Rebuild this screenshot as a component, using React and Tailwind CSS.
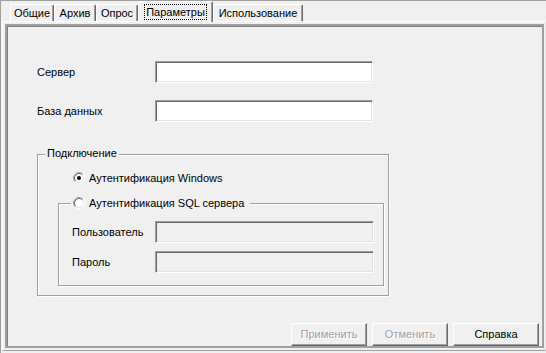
import React from 'react';

const sunken =
  'border-t border-l border-[#a0a0a0] border-b border-r border-b-white border-r-white shadow-[inset_1px_1px_0_#696969,inset_-1px_-1px_0_#e3e3e3]';
const etched =
  'border border-[#a0a0a0] shadow-[1px_1px_0_#fff,inset_1px_1px_0_#fff]';
const raised =
  'border-t border-l border-white border-b border-r border-b-[#696969] border-r-[#696969] shadow-[inset_-1px_-1px_0_#a0a0a0]';

function Radio({ checked }) {
  return (
    <svg width="12" height="12" viewBox="0 0 12 12" className="shrink-0">
      <circle cx="6" cy="6" r="4.5" fill="#fff" />
      <path d="M2.11 9.89 A5.5 5.5 0 0 1 9.89 2.11" fill="none" stroke="#a0a0a0" strokeWidth="1" />
      <path d="M2.82 9.18 A4.5 4.5 0 0 1 9.18 2.82" fill="none" stroke="#696969" strokeWidth="1" />
      <path d="M9.89 2.11 A5.5 5.5 0 0 1 2.11 9.89" fill="none" stroke="#fff" strokeWidth="1" />
      <path d="M9.18 2.82 A4.5 4.5 0 0 1 2.82 9.18" fill="none" stroke="#e3e3e3" strokeWidth="1" />
      {checked && <circle cx="6" cy="6" r="2" fill="#000" />}
    </svg>
  );
}

function Tab({ label, width, active }) {
  if (active) {
    return (
      <div
        className={`relative z-10 -mb-px h-[21px] ${width} flex items-start justify-center pt-[2px] bg-[#f0f0f0] border-t border-l border-white border-r border-r-[#696969] rounded-t-[2px] shadow-[inset_-1px_0_0_#a0a0a0]`}
      >
        <span className="px-px h-[16px] leading-[14px] border border-dotted border-black">{label}</span>
      </div>
    );
  }
  return (
    <div
      className={`h-[17px] ${width} flex items-center justify-center leading-none border-t border-l border-white border-r border-r-[#696969] rounded-t-[2px] shadow-[inset_-1px_0_0_#a0a0a0]`}
    >
      {label}
    </div>
  );
}

function Field({ label, labelWidth, inputWidth, disabled, className = '' }) {
  return (
    <div className={`flex items-center ${className}`}>
      <span className={`${labelWidth} shrink-0`}>{label}</span>
      <div className={`${inputWidth} h-[22px] ${disabled ? 'bg-[#f0f0f0]' : 'bg-white'} ${sunken}`} />
    </div>
  );
}

function Button({ label, width, disabled }) {
  return (
    <div
      className={`${width} h-[23px] flex items-center justify-center bg-[#f0f0f0] ${raised} ${
        disabled ? 'text-[#a0a0a0] [text-shadow:1px_1px_0_#fff]' : 'text-black'
      }`}
    >
      {label}
    </div>
  );
}

export default function App() {
  return (
    <div className="w-[546px] h-[353px] bg-[#f0f0f0] border-l border-t border-[#a0a0a0] flex flex-col font-['Liberation_Sans',Arial,sans-serif] text-[11px] text-black overflow-hidden">
      <div className="h-[20px] flex items-end pl-[9px] shrink-0">
        <Tab label="Общие" width="w-[44px]" />
        <Tab label="Архив" width="w-[42px]" />
        <Tab label="Опрос" width="w-[42px]" />
        <Tab label="Параметры" width="w-[75px]" active />
        <Tab label="Использование" width="w-[90px]" />
      </div>

      <div className="ml-px w-[544px] h-[330px] shrink-0 border-t border-l border-white border-b border-r border-b-[#a0a0a0] border-r-[#e3e3e3] pl-[2px] pt-[2px]">
        <div className="w-[539px] h-[324px] border-2 border-[#a0a0a0] shadow-[inset_1px_1px_0_#808080] flex flex-col">
          <Field label="Сервер" labelWidth="w-[118px]" inputWidth="w-[218px]" className="ml-[30px] mt-[35px]" />
          <Field label="База данных" labelWidth="w-[118px]" inputWidth="w-[218px]" className="ml-[30px] mt-[17px]" />

          <div className={`relative ml-[30px] mt-[32px] w-[352px] pb-[9px] ${etched}`}>
            <span className="absolute -top-[8px] left-[7px] h-[13px] leading-[13px] px-[2px] bg-[#f0f0f0]">
              Подключение
            </span>

            <div className="flex items-center gap-[4px] ml-[35px] mt-[16px] h-[14px]">
              <Radio checked />
              <span>Аутентификация Windows</span>
            </div>

            <div className={`relative ml-[20px] mt-[18px] w-[326px] pb-[12px] ${etched}`}>
              <div className="absolute -top-[8px] left-[12px] h-[14px] flex items-center gap-[4px] pl-[2px] pr-[6px] bg-[#f0f0f0]">
                <Radio />
                <span>Аутентификация SQL сервера</span>
              </div>
              <Field
                label="Пользователь"
                labelWidth="w-[83px]"
                inputWidth="w-[219px]"
                disabled
                className="ml-[13px] mt-[17px]"
              />
              <Field
                label="Пароль"
                labelWidth="w-[83px]"
                inputWidth="w-[219px]"
                disabled
                className="ml-[13px] mt-[8px]"
              />
            </div>
          </div>

          <div className="mt-auto flex justify-end gap-[5px] pr-[3px]">
            <Button label="Применить" width="w-[76px]" disabled />
            <Button label="Отменить" width="w-[76px]" disabled />
            <Button label="Справка" width="w-[86px]" />
          </div>
        </div>
      </div>
    </div>
  );
}
